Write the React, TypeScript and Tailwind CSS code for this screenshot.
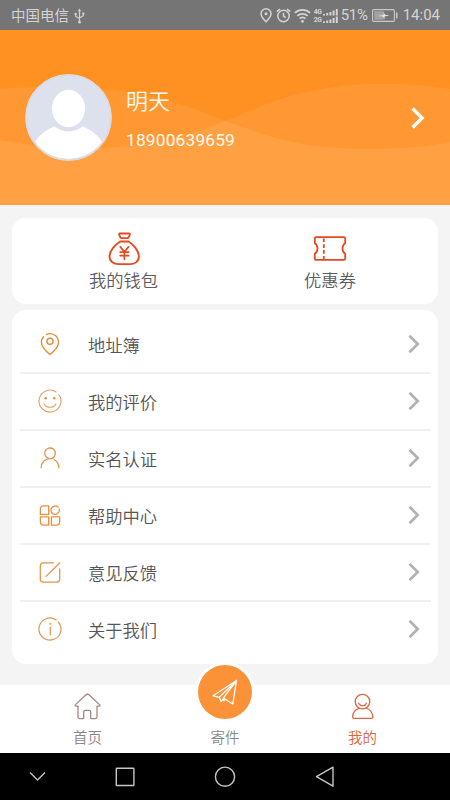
import React from 'react';

interface MenuItem {
  label: string;
  icon: React.ReactNode;
}

const LocationIcon = () => (
  <svg className="w-6 h-6" viewBox="0 0 24 24" fill="none" stroke="#e58a3c" strokeWidth="1.4" strokeLinecap="round">
    <path d="M5.400 4.700A8.600 8.600 0 0 0 3.400 10c0 4.200 4.400 9.200 8.600 12.500 4.200-3.300 8.600-8.300 8.600-12.500 0-5-3.900-8.400-8.600-8.400-1.300 0-2.500.3-3.600.8" />
    <circle cx="12" cy="9.300" r="3.100" />
  </svg>
);

const SmileIcon = () => (
  <svg className="w-6 h-6" viewBox="0 0 24 24" fill="none" stroke="#e2a064" strokeWidth="1.100" strokeLinecap="round">
    <path d="M18.200 3A11 11 0 1 0 20.800 5.500" />
    <path d="M6 14.700c2.500 4.800 9.500 4.800 12 0" />
    <circle cx="7.700" cy="9.300" r="1.200" fill="#e58a3c" stroke="none" />
    <circle cx="16.300" cy="9.300" r="1.200" fill="#e58a3c" stroke="none" />
  </svg>
);

const PersonIcon = () => (
  <svg className="w-6 h-6" viewBox="0 0 24 24" fill="none" stroke="#e2954f" strokeWidth="1.300" strokeLinecap="round">
    <path d="M15 11.700a5.300 5.300 0 1 0-3 .900" />
    <path d="M3.100 21.800c.2-5.400 3.900-9.200 8.900-9.200 1.600 0 3-.4 4-1.400M16.300 13.700c2.800 1.600 4.500 4.300 4.600 8.100" />
  </svg>
);

const GridIcon = () => (
  <svg className="w-6 h-6" viewBox="0 0 24 24" fill="none" stroke="#e88e3f" strokeWidth="1.300" strokeLinecap="round" strokeLinejoin="round">
    <path d="M5.500 2.800h5.200v8.500H2.400V6a3.100 3.100 0 0 1 3.100-3.200z" />
    <path d="M20 4.100a4.200 4.200 0 1 0 1.200 2" />
    <path d="M2.400 13.800h8.300v8.400H5.500a3.100 3.100 0 0 1-3.100-3.100z" />
    <path d="M13.400 13.800h8.200v5.300a3.100 3.100 0 0 1-3.100 3.100h-5.100z" />
  </svg>
);

const EditIcon = () => (
  <svg className="w-6 h-6" viewBox="0 0 24 24" fill="none" stroke="#e2954f" strokeWidth="1.300" strokeLinecap="round">
    <path d="M15.600 2.800H5.300a3 3 0 0 0-3 3v13.300a3 3 0 0 0 3 3h13.400a3 3 0 0 0 3-3V8.800" />
    <path d="M21.600 3L8 16.400" />
  </svg>
);

const InfoIcon = () => (
  <svg className="w-6 h-6" viewBox="0 0 24 24" fill="none" stroke="#e2954f" strokeWidth="1.200" strokeLinecap="round">
    <path d="M18.200 3A11 11 0 1 0 20.400 5" />
    <path d="M12.300 10.200v7.600" />
    <circle cx="12.300" cy="6.800" r="1" fill="#e2954f" stroke="none" />
  </svg>
);

const MoneyBagIcon = () => (
  <svg className="w-8 h-[34px]" viewBox="0 0 32 34" fill="none" stroke="#e8471f" strokeWidth="1.800" strokeLinejoin="round" strokeLinecap="round">
    <path d="M11.900 1.500h9c1.100 0 1.200.9.800 1.700l-1 2c-.3.700-.7 1-1.500 1h-5.400c-.8 0-1.200-.3-1.500-1l-1-2c-.4-.8-.300-1.700.600-1.700z" />
    <path d="M12.300 9.500h8.200c4.700 2.900 10.400 9.100 10.400 15.100 0 5.200-4.600 7.600-8.700 7.600H10.400c-4.200 0-8.900-2.400-8.900-7.600 0-6 6-12.200 10.800-15.100z" />
    <path d="M12.300 14.900l4.100 4.900 4.100-4.900M16.400 19.800v7.500M12.200 20.100h8.400M12.200 23.600h8.400" strokeWidth="1.700" />
  </svg>
);

const CouponIcon = () => (
  <svg className="w-[34px] h-[34px]" viewBox="0 0 34 34" fill="none" stroke="#e8471f" strokeWidth="1.800" strokeLinejoin="round">
    <path d="M3.300 5.100h27.400c1 0 1.500.5 1.500 1.500v4.600c-3.600 2.100-3.600 8.300 0 10.600v4.600c0 1-.5 1.500-1.500 1.500H3.300c-1 0-1.500-.5-1.500-1.500v-4.600c3.600-2.300 3.600-8.500 0-10.600V6.600c0-1 .5-1.500 1.500-1.500z" />
    <path d="M10.800 6.500v21" strokeDasharray="3.600 2.200" />
  </svg>
);

const ChevronRight = () => (
  <svg className="w-3 h-5" viewBox="0 0 12 20" fill="none" stroke="#b2b2b2" strokeWidth="2.700">
    <path d="M1.500 1.800L9.700 10l-8.200 8.200" />
  </svg>
);

const StatusBar = () => (
  <div className="h-[30px] shrink-0 bg-[#757575] flex items-center pt-px pl-[11px] pr-2.5 text-[#d4d4d4]">
    <span className="text-[14.500px] leading-none pt-[3px]">中国电信</span>
    <svg className="ml-[5px] w-[11px] h-4" viewBox="0 0 11 16" fill="none" stroke="#d0d0d0" strokeWidth="1.200">
      <path d="M5.500 2.500v11M1.700 6v2.200l3.800 2.600M9.300 5.500v2.200L5.500 10" />
      <path d="M5.500 .5l1.800 2.800H3.700zM.6 5h2.200v2H.6zM8.200 4.500h2.200v2H8.200z" fill="#d0d0d0" stroke="none" />
      <circle cx="5.500" cy="14" r="1.500" fill="#d0d0d0" stroke="none" />
    </svg>
    <div className="ml-auto flex items-center">
      <svg className="w-3 h-[15px]" viewBox="0 0 12 15" fill="none" stroke="#d4d4d4" strokeWidth="1.500">
        <path d="M6 13.800C3.200 10.900 1 8.500 1 5.800a5 5 0 0 1 10 0c0 2.700-2.200 5.100-5 8z" />
        <circle cx="6" cy="5.800" r="1.500" fill="#d4d4d4" stroke="none" />
      </svg>
      <svg className="ml-1 w-[15px] h-[15px]" viewBox="0 0 15 15" fill="none" stroke="#d4d4d4" strokeWidth="1.500">
        <circle cx="7.500" cy="8" r="5.700" />
        <path d="M7.500 4.800V8.200l2.300 1.400M.8 3.700L4 1.100M14.200 3.700L11 1.100" />
      </svg>
      <svg className="ml-[3px] w-[17px] h-[15px]" viewBox="0 0 17 15" fill="none" stroke="#d4d4d4" strokeWidth="1.700">
        <path d="M.9 4.900a11 11 0 0 1 15.200 0M3.300 7.900a7.500 7.500 0 0 1 10.400 0M5.600 10.700a4.300 4.300 0 0 1 5.800 0" />
        <circle cx="8.500" cy="13.300" r="1.400" fill="#d4d4d4" stroke="none" />
      </svg>
      <div className="ml-[3px] w-[9px] flex flex-col text-[6.800px] leading-[8px] font-bold tracking-[-0.400px]">
        <span>4G</span>
        <span>2G</span>
      </div>
      <svg className="w-[15px] h-[14px]" viewBox="0 0 15 14" fill="#d4d4d4">
        <path d="M0 5h2v1.500H0zM3.200 4h2v2.500h-2zM6.400 3h2v3.500h-2zM9.600 1.500h2v5h-2zM12.800 0h2v6.500h-2z" />
        <path d="M0 12.500h2V14H0zM3.200 11.500h2V14h-2zM6.400 10.500h2V14h-2zM9.600 9h2v5h-2zM12.800 7.500h2V14h-2z" />
      </svg>
      <span className="ml-[3px] w-[27px] text-[15px] leading-none tracking-[-0.200px] whitespace-nowrap">51%</span>
      <svg className="ml-1 w-[26px] h-[13px]" viewBox="0 0 26 13" fill="none" stroke="#c9c9c9" strokeWidth="1.100">
        <rect x=".6" y=".6" width="21.800" height="11.800" rx="1.200" />
        <path d="M2.200 2.200h9.500v8.600H2.200z" fill="#a2a2a2" stroke="none" />
        <path d="M24.700 3.500v6" strokeWidth="1.500" />
        <path d="M6 7l5.500-1V3l1.500 2.800 4.500.7-5 1V10.500l-1.500-3z" fill="#e8e8e8" stroke="none" />
      </svg>
      <span className="ml-[5px] text-[15px] leading-none">14:04</span>
    </div>
  </div>
);

const ProfileHeader = () => (
  <div className="relative h-[175px] shrink-0 bg-[#ff9022] flex items-center pl-[25px] pr-[25px] text-[#fffaf0]">
    <svg className="absolute inset-0 w-full h-full" viewBox="0 0 450 175" preserveAspectRatio="none">
      <path d="M0 59C60 53 125 57 180 74C230 91 270 112 325 117C370 121 415 119 450 112V175H0z" fill="#fff" fillOpacity=".08" />
      <path d="M0 110C50 120 105 121 150 113C200 105 235 86 275 71C325 53 390 49 450 59V175H0z" fill="#fff" fillOpacity=".08" />
    </svg>
    <svg className="relative w-[87px] h-[87px]" viewBox="0 0 87 87">
      <defs>
        <clipPath id="avatar">
          <circle cx="43.500" cy="43.500" r="41.500" />
        </clipPath>
      </defs>
      <circle cx="43.500" cy="43.500" r="43.200" fill="#dde1ee" />
      <g clipPath="url(#avatar)" fill="#fff">
        <ellipse cx="43.500" cy="34.500" rx="16.500" ry="18.700" />
        <path d="M4 80C9 65 18 57 29.500 52.500 38 59 49 59 57.500 52.500 69 57 78 65 83 80v7H4z" />
      </g>
      <circle cx="43.500" cy="43.500" r="42.400" fill="none" stroke="#dcdbe1" strokeWidth="1.700" />
    </svg>
    <div className="relative ml-3.5 pt-[5px] flex flex-col gap-4">
      <span className="text-[22px] leading-6 font-[350]">明天</span>
      <span className="text-[17.300px] leading-5 tracking-[0.200px]">18900639659</span>
    </div>
    <svg className="relative ml-auto w-[14px] h-[22px]" viewBox="0 0 14 22" fill="none" stroke="#fff" strokeWidth="3.400">
      <path d="M1.600 1.500l9.500 9.500-9.500 9.500" />
    </svg>
  </div>
);

const menuItems: MenuItem[] = [
  { label: '地址簿', icon: <LocationIcon /> },
  { label: '我的评价', icon: <SmileIcon /> },
  { label: '实名认证', icon: <PersonIcon /> },
  { label: '帮助中心', icon: <GridIcon /> },
  { label: '意见反馈', icon: <EditIcon /> },
  { label: '关于我们', icon: <InfoIcon /> },
];

const TabBar = () => (
  <div className="h-[68px] shrink-0 bg-white grid grid-cols-[175px_100px_175px] text-[14.500px] leading-5 font-[350] text-[#888]">
    <div className="flex flex-col items-center pt-[7px]">
      <svg className="w-7 h-[29px]" viewBox="0 0 28 29" fill="none" stroke="#a08a84" strokeWidth="1.300" strokeLinejoin="round">
        <path d="M12.300 2.500L1.500 12.600c-.8.800-.5 1.500.4 1.500H4v11c0 1 .5 1.500 1.500 1.500h4.200V20c0-1 .5-1.600 1.500-1.600h4c1 0 1.500.6 1.500 1.600v6.600h4.800c1 0 1.500-.5 1.500-1.500v-11h2.100c.9 0 1.200-.7.4-1.500L14.700 2.500c-.8-.700-1.600-.700-2.400 0z" />
      </svg>
      <span className="mt-2">首页</span>
    </div>
    <div className="flex flex-col items-center">
      {/* raised send button, sits above the bar edge */}
      <div className="relative -mt-[23px] w-[60px] h-[60px] rounded-full bg-white flex items-center justify-center">
        <div className="w-[54px] h-[54px] rounded-full bg-[#fc9237] flex items-center justify-center">
          <svg className="w-[26px] h-[26px]" viewBox="0 0 26 26" fill="none" stroke="#fff" strokeWidth="1.300" strokeLinejoin="round" strokeLinecap="round">
            <path d="M24.500 1.500L1 16.800l6.300 1.500L24.500 1.500l-3.700 23.500-6.300-4M24.500 1.500L11.500 18.800l.5 3M7.300 18.300l1.700 4.200 2.700-3.200 4.300 2.700" />
          </svg>
        </div>
      </div>
      <span className="mt-[7px]">寄件</span>
    </div>
    <div className="flex flex-col items-center pt-[7px] text-[#e0623a]">
      <svg className="w-6 h-[29px]" viewBox="0 0 24 29" fill="none" stroke="#dc6848" strokeWidth="1.300" strokeLinejoin="round" strokeLinecap="round">
        <circle cx="11.500" cy="9.600" r="7.300" />
        <path d="M7.500 11.300c1.800 3.300 6.200 3.300 8 0" />
        <path d="M8 16.300C4 17.700 1.700 21 1.600 25c0 1 .4 1.400 1.400 1.400h17.400c1 0 1.400-.4 1.400-1.400-.1-4-2.600-7.500-6.600-9" />
      </svg>
      <span className="mt-2">我的</span>
    </div>
  </div>
);

const SystemNav = () => (
  <div className="h-[47px] shrink-0 bg-black flex items-center">
    <svg className="w-full h-[47px]" viewBox="0 0 450 47" fill="none" stroke="#c6c6c6" strokeWidth="1.400" strokeLinejoin="round">
      <path d="M30 19.500l7.500 7.500 7.500-7.500" />
      <rect x="116.300" y="15.200" width="17.600" height="17.300" rx=".5" />
      <circle cx="225" cy="23.700" r="9.600" />
      <path d="M333 14.200v19L316.500 23.700z" />
    </svg>
  </div>
);

const App: React.FC = () => {
  return (
    <div className="w-full h-screen overflow-hidden flex flex-col bg-[#f4f4f4] font-[Roboto,'Noto_Sans_CJK_SC',sans-serif]">
      <StatusBar />
      <ProfileHeader />

      <main className="flex-1 min-h-0 px-3 pt-[13px]">
        <div className="h-[86px] bg-white rounded-[14px] grid grid-cols-[223px_1fr] text-[17.300px] leading-6 font-[350] text-[#5c5c5c]">
          <div className="flex flex-col items-center pt-[14px]">
            <MoneyBagIcon />
            <span className="mt-[3px]">我的钱包</span>
          </div>
          <div className="flex flex-col items-center pt-[14px] pr-[13px]">
            <CouponIcon />
            <span className="mt-[3px]">优惠券</span>
          </div>
        </div>

        <div className="mt-1.5 h-[354px] pt-[7px] pl-2 pr-[7px] bg-white rounded-[14px] divide-y-2 divide-[#f0f0f0]">
          {menuItems.map((item) => (
            <div key={item.label} className="h-[57px] last:h-[55px] flex items-center pb-px pl-[18px] pr-[11px]">
              {item.icon}
              <span className="ml-[26px] pt-1 text-[17.300px] leading-6 font-[350] text-[#555]">{item.label}</span>
              <div className="ml-auto">
                <ChevronRight />
              </div>
            </div>
          ))}
        </div>
      </main>

      <TabBar />
      <SystemNav />
    </div>
  );
};

export default App;
